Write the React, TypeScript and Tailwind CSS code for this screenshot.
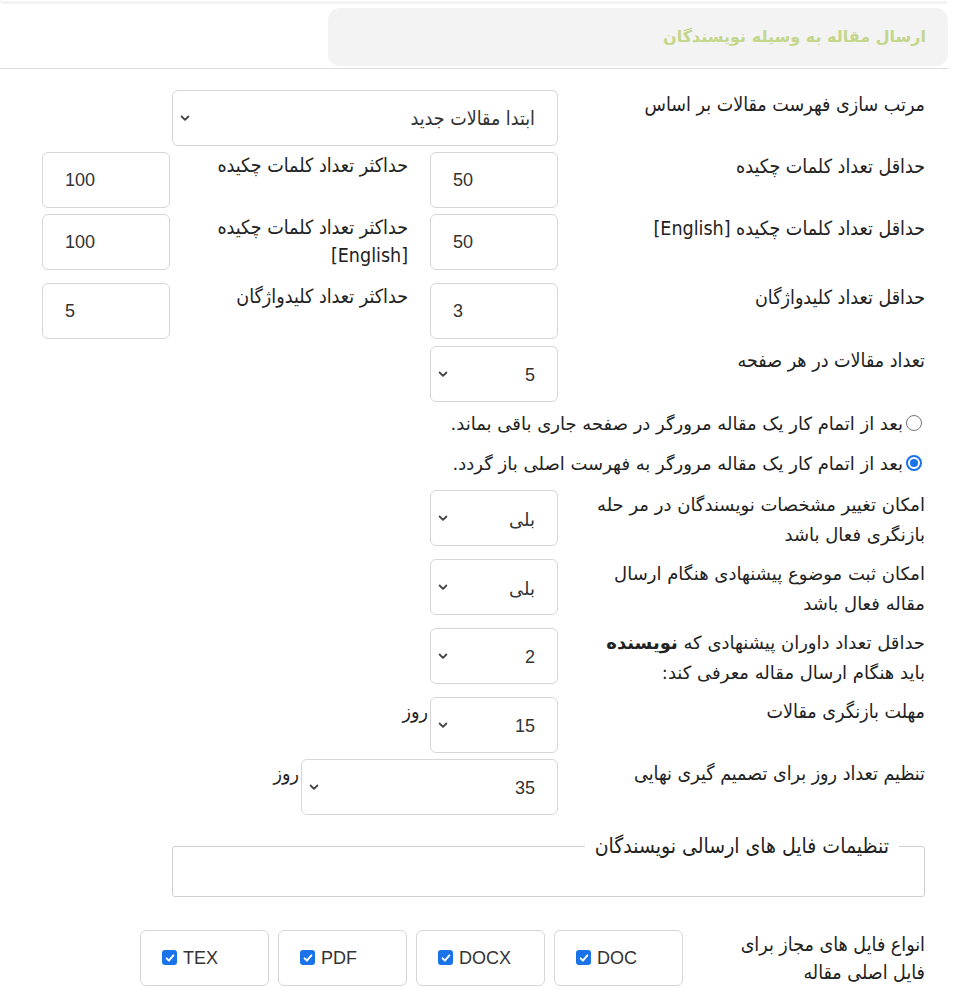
import React from "react";

const COND = "font-['DejaVu_Sans_Condensed','Liberation_Sans',sans-serif]";
const WIDE = "font-['DejaVu_Sans','Noto_Sans',sans-serif]";

function Chevron() {
  return (
    <svg className="w-[12px] h-[12px] text-[#444]" viewBox="0 0 16 16" fill="none" stroke="currentColor" strokeWidth={2.4} strokeLinecap="round" strokeLinejoin="round">
      <path d="M3.5 6l4.5 4.5L12.5 6" />
    </svg>
  );
}

function Box({ value, w = "w-[128px]" }: { value: string; w?: string }) {
  return (
    <div dir="ltr" className={`${w} h-[56px] shrink-0 border border-[#d6d6d6] rounded-[6px] bg-white flex items-center px-[22px] font-['Liberation_Sans',sans-serif] text-[18px] text-[#333]`}>
      {value}
    </div>
  );
}

function Select({ value, w = "w-[128px]", cls = "" }: { value: string; w?: string; cls?: string }) {
  return (
    <div className={`${w} h-[56px] shrink-0 border border-[#d6d6d6] rounded-[6px] bg-white flex items-center justify-between pr-[22px] pl-[6px] text-[#333] ${cls}`}>
      <span className="pt-[2px]">{value}</span>
      <Chevron />
    </div>
  );
}

function Label({ children, cls = "" }: { children: React.ReactNode; cls?: string }) {
  return <div className={`w-[367px] shrink-0 text-[#222] leading-[30px] ${cls}`}>{children}</div>;
}

function Label2({ children }: { children: React.ReactNode }) {
  return <div className="w-[238px] shrink-0 text-[19.5px] text-[#222] leading-[28px]">{children}</div>;
}

const NUM = "font-['Liberation_Sans',sans-serif] text-[18px]";

export default function App() {
  return (
    <div dir="rtl" className={`w-[975px] min-h-[989px] bg-white ${COND} text-[19.5px]`}>
      {/* top strip */}
      <div className="h-[4px] w-[947px] mr-[28px] border-b-[3px] border-[#f3f3f3] rounded-bl-[6px]" />

      {/* header */}
      <div className="border-b border-[#dcdcdc] w-[948px] mr-auto pt-[4px] pb-[2px]">
        <div className="w-[620px] h-[58px] bg-[#f3f3f3] rounded-[12px] flex items-center pr-[22px]">
          <span className={`${WIDE} text-[16px] font-bold text-[#c4d68a]`}>ارسال مقاله به وسیله نویسندگان</span>
        </div>
      </div>

      <div className="pr-[50px] pt-[21px]">
        {/* row 1 */}
        <div className="flex h-[62px]">
          <Label>مرتب سازی فهرست مقالات بر اساس</Label>
          <Select value="ابتدا مقالات جدید" w="w-[386px]" />
        </div>

        {/* row 2 */}
        <div className="flex h-[62px]">
          <Label>حداقل تعداد کلمات چکیده</Label>
          <Box value="50" />
          <div className="w-[22px]" />
          <Label2>حداکثر تعداد کلمات چکیده</Label2>
          <Box value="100" />
        </div>

        {/* row 3 */}
        <div className="flex h-[69px]">
          <Label>حداقل تعداد کلمات چکیده [English]</Label>
          <Box value="50" />
          <div className="w-[22px]" />
          <Label2>حداکثر تعداد کلمات چکیده [English]</Label2>
          <Box value="100" />
        </div>

        {/* row 4 */}
        <div className="flex h-[63px]">
          <Label>حداقل تعداد کلیدواژگان</Label>
          <Box value="3" />
          <div className="w-[22px]" />
          <Label2>حداکثر تعداد کلیدواژگان</Label2>
          <Box value="5" />
        </div>

        {/* row 5 */}
        <div className="flex h-[56px]">
          <Label>تعداد مقالات در هر صفحه</Label>
          <Select value="5" cls={NUM} />
        </div>

        {/* radios */}
        <div className={`${WIDE} text-[18px] text-[#222] pt-[1px] pb-[7px]`}>
          <div className="flex items-center h-[40px] gap-[3px]">
            <span className="w-[16px] h-[16px] rounded-full border border-[#767676] bg-white shrink-0 mr-[3px]" />
            <span>بعد از اتمام کار یک مقاله مرورگر در صفحه جاری باقی بماند.</span>
          </div>
          <div className="flex items-center h-[40px] gap-[3px]">
            <span className="w-[16px] h-[16px] rounded-full border-[2px] border-[#1a73e8] bg-white shrink-0 mr-[3px] flex items-center justify-center">
              <span className="w-[8px] h-[8px] rounded-full bg-[#1a73e8]" />
            </span>
            <span>بعد از اتمام کار یک مقاله مرورگر به فهرست اصلی باز گردد.</span>
          </div>
        </div>

        {/* two-line rows */}
        <div className="flex h-[69px]">
          <Label cls={`${WIDE} text-[18px] pl-[20px]`}>امکان تغییر مشخصات نویسندگان در مر حله بازنگری فعال باشد</Label>
          <Select value="بلی" cls={`${WIDE} text-[18px]`} />
        </div>
        <div className="flex h-[69px]">
          <Label cls={`${WIDE} text-[18px] pl-[20px]`}>امکان ثبت موضوع پیشنهادی هنگام ارسال مقاله فعال باشد</Label>
          <Select value="بلی" cls={`${WIDE} text-[18px]`} />
        </div>
        <div className="flex h-[69px]">
          <Label cls={`${WIDE} text-[18px] pl-[30px]`}>
            حداقل تعداد داوران پیشنهادی که <b>نویسنده</b> باید هنگام ارسال مقاله معرفی کند:
          </Label>
          <Select value="2" cls={NUM} />
        </div>

        {/* review deadline */}
        <div className="flex h-[62px]">
          <Label>مهلت بازنگری مقالات</Label>
          <Select value="15" cls={NUM} />
          <span className="text-[#222] leading-[30px] mr-[2px]">روز</span>
        </div>
        <div className="flex h-[56px]">
          <Label>تنظیم تعداد روز برای تصمیم گیری نهایی</Label>
          <Select value="35" w="w-[257px]" cls={NUM} />
          <span className="text-[#222] leading-[30px] mr-[2px]">روز</span>
        </div>

        {/* fieldset */}
        <fieldset className="mt-[16px] w-[753px] h-[66px] border border-[#d0d0d0] rounded-[3px] px-[16px]">
          <legend className="text-[21px] text-[#222] px-[10px] mr-[9px]">تنظیمات فایل های ارسالی نویسندگان</legend>
        </fieldset>

        {/* file types */}
        <div className="flex mt-[33px]">
          <div className="w-[242px] shrink-0 text-[#222] leading-[28px] pt-[1px]">
            انواع فایل های مجاز برای
            <br />
            فایل اصلی مقاله
          </div>
          <div className="flex gap-[9px]">
            {["DOC", "DOCX", "PDF", "TEX"].map((t) => (
              <div
                key={t}
                dir="ltr"
                className="w-[129px] h-[56px] border border-[#d6d6d6] rounded-[6px] bg-white flex items-start pt-[18px] pl-[21px] gap-[6px] font-['Liberation_Sans',sans-serif] text-[18px] text-[#333]"
              >
                <span className="mt-[1px] w-[15px] h-[15px] rounded-[3px] bg-[#1a73e8] flex items-center justify-center shrink-0">
                  <svg viewBox="0 0 16 16" className="w-[12px] h-[12px]" fill="none" stroke="white" strokeWidth={2.6} strokeLinecap="round" strokeLinejoin="round">
                    <path d="M3.5 8.5l3 3 6-7" />
                  </svg>
                </span>
                <span className="leading-[18px]">{t}</span>
              </div>
            ))}
          </div>
        </div>
      </div>
    </div>
  );
}
